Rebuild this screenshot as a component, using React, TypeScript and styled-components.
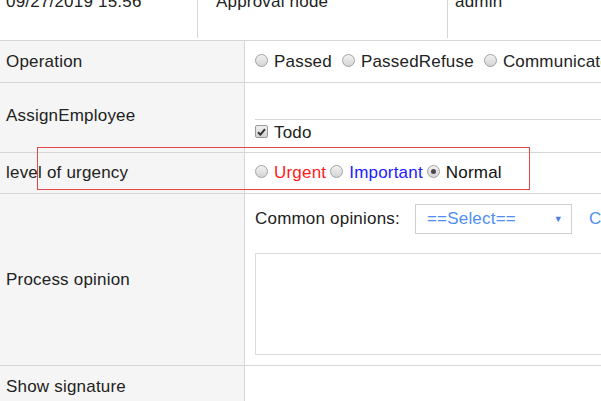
import React, { FC, ReactNode } from "react";
import styled, { createGlobalStyle } from "styled-components";

const GlobalStyle = createGlobalStyle`
  html, body {
    margin: 0;
    padding: 0;
    background: #fff;
  }
  body {
    font-family: "Liberation Sans", Arial, sans-serif;
    font-size: 17px;
    letter-spacing: 0.2px;
    color: #222;
  }
  * {
    box-sizing: border-box;
  }
`;

const Viewport = styled.div`
  width: 601px;
  height: 401px;
  overflow: hidden;
  position: relative;
`;

const Sheet = styled.div`
  width: 760px;
  margin-top: -20px;
`;

const TopRow = styled.div`
  display: flex;
  height: 58px;
  margin-bottom: 2px;
`;

const TopCell = styled.div<{ $width?: number; $indent: number; $last?: boolean }>`
  width: ${(p) => (p.$width ? `${p.$width}px` : "auto")};
  flex: ${(p) => (p.$width ? "none" : "1")};
  padding: 13px 0 0 ${(p) => p.$indent}px;
  line-height: 18px;
  border-right: ${(p) => (p.$last ? "none" : "1px solid #d6d6d6")};
  white-space: nowrap;
`;

const Table = styled.div`
  border-top: 1px solid #d6d6d6;
`;

const Row = styled.div<{ $height: number }>`
  display: grid;
  grid-template-columns: 245px 1fr;
  height: ${(p) => p.$height}px;
  border-bottom: 1px solid #d6d6d6;
  position: relative;
`;

const LabelCell = styled.div<{ $lift?: number }>`
  background: #f5f5f5;
  border-right: 1px solid #d6d6d6;
  display: flex;
  align-items: center;
  padding: 0 0 ${(p) => p.$lift || 0}px 6px;
  white-space: nowrap;
`;

const ValueCell = styled.div<{ $column?: boolean }>`
  display: flex;
  flex-direction: ${(p) => (p.$column ? "column" : "row")};
  align-items: ${(p) => (p.$column ? "stretch" : "center")};
  padding-left: 10px;
  white-space: nowrap;
  overflow: hidden;
`;

const OptionGroup = styled.div<{ $gap: number }>`
  display: flex;
  align-items: center;
  gap: ${(p) => p.$gap}px;
`;

const Option = styled.label<{ $color?: string }>`
  display: inline-flex;
  align-items: center;
  gap: 6px;
  color: ${(p) => p.$color || "#222"};
`;

const RadioDot = styled.span<{ $checked?: boolean }>`
  width: 13px;
  height: 13px;
  border-radius: 50%;
  border: 1px solid #a2a2a2;
  background: linear-gradient(#f2f2f2, #d4d4d4);
  margin-bottom: 3px;
  flex: none;
  position: relative;
  &::after {
    content: "";
    display: ${(p) => (p.$checked ? "block" : "none")};
    position: absolute;
    left: 3px;
    top: 3px;
    width: 5px;
    height: 5px;
    border-radius: 50%;
    background: #4a4a4a;
  }
`;

const CheckBox = styled.span`
  width: 13px;
  height: 13px;
  border: 1px solid #9a9a9a;
  border-radius: 2px;
  background: linear-gradient(#f0f0f0, #d2d2d2);
  display: inline-flex;
  align-items: center;
  justify-content: center;
  flex: none;
  margin-bottom: 2px;
`;

const Spacer = styled.div`
  height: 36px;
  flex: none;
`;

const TodoList = styled.div`
  border-top: 1px solid #d6d6d6;
  padding-top: 2px;
  display: flex;
  align-items: center;
  height: 24px;
`;

const Highlight = styled.div`
  position: absolute;
  left: 37px;
  top: -6px;
  width: 493px;
  height: 43px;
  border: 1px solid #e34848;
  pointer-events: none;
`;

const OpinionCell = styled.div`
  display: flex;
  flex-direction: column;
  padding: 10px 15px 0 10px;
  gap: 19px;
  overflow: hidden;
`;

const OpinionBar = styled.div`
  display: flex;
  align-items: center;
  white-space: nowrap;
`;

const Select = styled.div`
  width: 157px;
  height: 30px;
  border: 1px solid #cfcfcf;
  margin-left: 15px;
  display: flex;
  align-items: center;
  justify-content: space-between;
  padding: 0 8px 0 11px;
  color: #4f8ef2;
`;

const Arrow = styled.span`
  font-size: 9px;
  color: #4f7fe0;
`;

const LinkText = styled.span`
  color: #4f8ef2;
  margin-left: 17px;
`;

const TextArea = styled.div`
  height: 102px;
  border: 1px solid #dcdcdc;
`;

const Radio: FC<{ checked?: boolean; color?: string; children: ReactNode }> = ({
  checked,
  color,
  children,
}) => (
  <Option $color={color}>
    <RadioDot $checked={checked} />
    {children}
  </Option>
);

export default function App() {
  return (
    <Viewport>
      <GlobalStyle />
      <Sheet>
        <TopRow>
          <TopCell $width={198} $indent={6}>
            09/27/2019 15:56
          </TopCell>
          <TopCell $width={250} $indent={18}>
            Approval node
          </TopCell>
          <TopCell $indent={7} $last>
            admin
          </TopCell>
        </TopRow>
        <Table>
          <Row $height={42}>
            <LabelCell>Operation</LabelCell>
            <ValueCell>
              <OptionGroup $gap={10}>
                <Radio>Passed</Radio>
                <Radio>PassedRefuse</Radio>
                <Radio>Communicate</Radio>
              </OptionGroup>
            </ValueCell>
          </Row>
          <Row $height={70}>
            <LabelCell $lift={4}>AssignEmployee</LabelCell>
            <ValueCell $column>
              <Spacer />
              <TodoList>
                <Option>
                  <CheckBox>
                    <svg width="9" height="8" viewBox="0 0 9 8">
                      <path
                        d="M1 4.2 L3.4 6.6 L8 1.2"
                        fill="none"
                        stroke="#333"
                        strokeWidth="2"
                      />
                    </svg>
                  </CheckBox>
                  Todo
                </Option>
              </TodoList>
            </ValueCell>
          </Row>
          <Row $height={41}>
            <LabelCell>level of urgency</LabelCell>
            <ValueCell>
              <OptionGroup $gap={4}>
                <Radio color="#ff1a1a">Urgent</Radio>
                <Radio color="#2121ff">Important</Radio>
                <Radio checked color="#111">
                  Normal
                </Radio>
              </OptionGroup>
            </ValueCell>
            <Highlight />
          </Row>
          <Row $height={172}>
            <LabelCell>Process opinion</LabelCell>
            <OpinionCell>
              <OpinionBar>
                Common opinions:
                <Select>
                  ==Select==
                  <Arrow>▼</Arrow>
                </Select>
                <LinkText>Clear</LinkText>
              </OpinionBar>
              <TextArea />
            </OpinionCell>
          </Row>
          <Row $height={60}>
            <LabelCell $lift={18}>Show signature</LabelCell>
            <ValueCell />
          </Row>
        </Table>
      </Sheet>
    </Viewport>
  );
}
